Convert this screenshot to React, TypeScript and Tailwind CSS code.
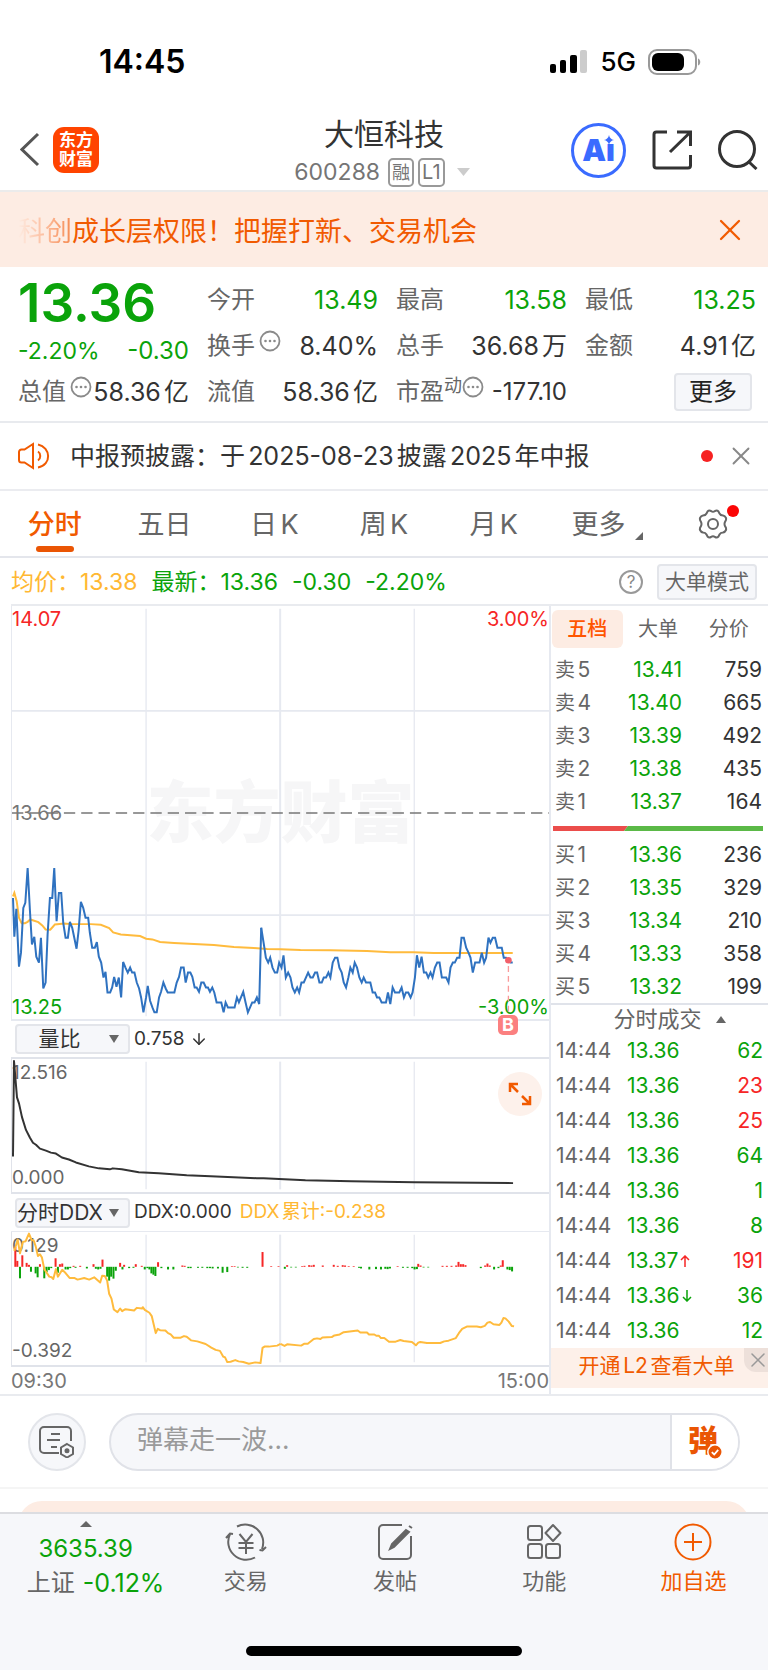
import { ArrowDown, X } from "lucide-react"

const PRICE_AM =
  "36,145 40,262 46,178 54,352 60,310 67,175 73,160 80,55 87,185 93,285 100,262 106,322 114,340 120,265 127,418 134,400 140,255 147,145 154,145 160,55 167,215 174,130 181,130 187,220 194,265 201,265 207,217 214,235 227,298 233,245 240,157 247,175 254,205 262,205 267,250 274,295 282,295 288,278 294,322 301,340 308,385 314,368 320,430 328,430 334,415 340,383 347,413 354,385 361,445 367,338 374,355 381,370 388,355 394,370 401,370 408,400 415,418 421,445 428,490 436,445 441,410 448,455 455,475 461,490 468,490 475,445 481,428 488,400 495,418 501,430 521,430 528,400 535,383 541,355 549,355 555,400 562,370 569,370 575,383 582,415 588,415 595,428 602,400 609,400 616,415 622,415 628,428 635,415 641,430 648,460 662,460 669,490 675,460 682,475 702,475 709,445 715,460 728,428 735,460 742,490 755,460 762,460 769,445 776,465 782,235"
const PRICE_PM =
  "32,235 40,285 46,325 53,340 59,325 66,355 73,370 80,370 86,340 93,355 99,318 106,385 113,370 120,385 126,415 133,430 140,415 146,430 153,400 160,400 173,370 180,385 187,385 194,370 200,370 207,400 214,400 220,385 227,385 234,370 240,385 247,340 254,325 261,325 267,355 274,370 280,400 287,415 294,385 300,355 307,370 313,340 320,355 327,385 334,400 340,385 347,400 360,400 367,430 374,430 380,445 387,445 394,460 407,460 413,430 420,465 427,415 434,430 447,430 454,415 461,445 467,430 474,430 481,445 487,430 494,385 500,318 507,355 514,322 521,370 528,370 534,385 541,370 547,385 554,355 561,340 568,340 575,385 588,385 595,400 601,355 608,340 614,340 621,325 628,325 634,265 641,265 648,295 655,310 661,325 668,370 675,340 688,340 695,310 702,340 708,325 715,265 721,280 728,265 735,265 742,295 755,295 761,325 768,325 775,333 781,340 788,340"
const AVERAGE =
  "36,140 40,130 47,155 54,205 62,221 72,221 80,217 88,210 112,218 124,228 134,240 148,241 156,232 162,225 190,222 210,224 270,224 300,226 325,236 337,249 360,255 418,260 436,268 455,270 478,278 520,281 640,287 700,293 760,296 800,299 840,300 900,302 990,303 1100,305 1170,309 1240,309 1300,311 1538,311"
const VOLUME_RATIO =
  "1,99 2,2 5,39 7,45 10,59 14,72 18,80 21,85 24,87 28,91 34,93 39,95 44,96 50,100 57,102 64,105 77,109 87,111 98,112 101,111 110,112 127,115 147,116 175,118 199,119 245,121 252,121 294,123 340,124 403,125 502,126"
const DDX_AM =
  "40,180 50,145 57,187 66,152 74,150 84,127 92,147 98,147 104,165 111,195 117,190 123,200 130,235 145,258 152,260 157,265 165,235 171,258 184,237 194,247 206,262 220,262 230,267 250,262 265,267 280,260 298,276 304,255 312,256 319,270 325,310 332,325 339,358 350,366 358,355 364,363 374,357 400,361 408,353 424,355 426,351 432,359 446,368 453,378 465,430 471,417 478,421 494,422 502,430 510,434 519,444 540,444 550,439 558,441 571,452 590,455 615,463 632,474 645,481 658,484 668,502 673,503 680,518 690,517 704,512 714,516 728,518 745,523 764,519 780,521 786,475 792,471 805,471 830,468 840,463"
const DDX_PM =
  "60,463 72,469 80,464 122,468 132,462 142,462 160,448 170,446 180,448 186,443 214,442 222,437 238,434 250,427 292,422 300,428 320,428 326,434 342,434 348,438 356,438 362,445 372,445 386,456 406,456 420,451 430,454 455,457 467,467 474,459 480,457 500,460 540,460 552,455 565,453 587,445 596,430 606,417 620,410 650,410 662,412 674,408 682,398 690,396 700,403 718,405 724,398 730,384 736,385 746,395 755,408 762,409"

// [x, height]: positive rises above the zero line, negative falls below it
const DDX_BARS = [
  [43, 60], [49, 18], [64, 35], [77, 12], [84, 6], [117, 8], [164, 26], [177, 8], [184, 10], [218, 3], [238, 3],
  [278, 8], [305, 22], [358, 12], [370, 6], [405, 8], [423, 3], [472, 14], [545, 4], [552, 3], [694, 2], [702, 2],
  [786, 45], [812, 2], [834, 2], [860, 5], [905, 2], [912, 3], [926, 5], [933, 4], [940, 6], [967, 4], [1000, 6],
  [1012, 3], [1027, 5], [1034, 4], [1045, 2], [1060, 2], [1192, 2], [1254, 9], [1261, 4], [1327, 3], [1340, 3],
  [1354, 3], [1368, 4], [1375, 15], [1382, 8], [1389, 8], [1396, 5], [1455, 4], [1462, 10], [1469, 4], [1502, 4],
  [1508, 20], [57, -35], [90, -15], [104, -20], [110, -32], [130, -35], [137, -16], [144, -10], [151, -4],
  [171, -18], [194, -8], [201, -8], [208, -4], [224, -3], [258, -5], [285, -6], [292, -8], [299, -6], [319, -30],
  [325, -42], [331, -30], [338, -36], [345, -12], [365, -8], [385, -4], [398, -3], [432, -8], [440, -4], [446, -8],
  [452, -20], [458, -24], [464, -28], [482, -4], [502, -8], [518, -8], [563, -4], [570, -4], [592, -3], [605, -3],
  [620, -4], [628, -4], [636, -5], [652, -5], [666, -18], [680, -16], [712, -2], [726, -3], [740, -3], [853, -6],
  [872, -2], [886, -2], [1076, -3], [1082, -5], [1107, -8], [1127, -7], [1142, -8], [1155, -6], [1162, -7],
  [1169, -5], [1208, -3], [1222, -3], [1236, -4], [1243, -8], [1250, -7], [1270, -2], [1284, -2], [1442, -4],
  [1482, -8], [1495, -4], [1522, -8], [1529, -10], [1536, -14],
]

const asks = [["5", "13.41", "759"], ["4", "13.40", "665"], ["3", "13.39", "492"], ["2", "13.38", "435"], ["1", "13.37", "164"]]
const bids = [["1", "13.36", "236"], ["2", "13.35", "329"], ["3", "13.34", "210"], ["4", "13.33", "358"], ["5", "13.32", "199"]]

const trades = [
  { price: "13.36", vol: "62", up: false },
  { price: "13.36", vol: "23", up: true },
  { price: "13.36", vol: "25", up: true },
  { price: "13.36", vol: "64", up: false },
  { price: "13.36", vol: "1", up: false },
  { price: "13.36", vol: "8", up: false },
  { price: "13.37", vol: "191", up: true, move: "up" },
  { price: "13.36", vol: "36", up: false, move: "down" },
  { price: "13.36", vol: "12", up: false },
]

function StatusBar() {
  return (
    <div className="flex h-24 items-center justify-between pt-7 pr-[66px] pl-[99px]">
      <span className="text-[32px] leading-9 font-semibold text-black">14:45</span>
      <div className="flex items-center">
        <svg className="h-6 w-[38px]" viewBox="0 0 38 24">
          <rect x="0" y="14" width="6" height="9" rx="2" />
          <rect x="10" y="10" width="6" height="13" rx="2" />
          <rect x="20" y="5" width="7" height="18" rx="2" />
          <rect x="30" y="0" width="7" height="23" rx="2" fill="#ccc" />
        </svg>
        <span className="ml-3 text-[26px] leading-8 font-medium text-black">5G</span>
        <svg className="ml-3 h-[26px] w-[54px]" viewBox="0 0 54 26">
          <rect x="1" y="1" width="47" height="24" rx="8" fill="none" stroke="#999" strokeWidth="2" />
          <rect x="4" y="4" width="32" height="18" rx="6" />
          <path d="M50 9.500c3 1 3 6 0 7z" fill="#999" />
        </svg>
      </div>
    </div>
  )
}

function Header() {
  return (
    <header className="grid h-24 grid-cols-[1fr_auto_1fr] items-center border-b-2 border-[#ebebeb] pt-[10px]">
      <div className="flex items-center pl-5">
        <button aria-label="返回">
          <svg className="h-9 w-5" viewBox="0 0 20 36" fill="none" stroke="#555" strokeWidth="3">
            <path d="M18 2L2 17.500L18 33" />
          </svg>
        </button>
        <div className="ml-[13px] flex h-[46px] w-[46px] flex-col items-center justify-center rounded-[11px] bg-[#ff4400] text-[17px] leading-[19px] font-bold text-white">
          <span>东方</span>
          <span>财富</span>
        </div>
      </div>
      <div className="flex flex-col items-center pt-2">
        <h1 className="text-[30px] leading-10 text-[#333]">大恒科技</h1>
        <button className="flex items-center pr-1 pb-1 text-[23px] leading-9 text-[#757575]">
          <span className="mr-2">600288</span>
          <span className="mr-1 rounded-[5px] border-2 border-[#999] px-[2px] text-[18px] leading-[25px]">融</span>
          <span className="rounded-[5px] border-2 border-[#999] px-[2px] text-[20px] leading-[25px]">L1</span>
          <svg className="ml-3 h-[8px] w-[13px]" viewBox="0 0 13 8" fill="#ccc">
            <path d="M0 0h13L6.500 8z" />
          </svg>
        </button>
      </div>
      <div className="flex items-center justify-end pr-[10px]">
        <button aria-label="AI" className="relative flex h-[55px] w-[55px] items-center justify-center rounded-full border-3 border-[#3a6bff] text-[30px] leading-8 font-black text-[#3a6bff]">
          Aı
          <svg className="absolute top-[9px] right-[9px] h-[10px] w-[10px]" viewBox="0 0 10 10" fill="#3a6bff">
            <path d="M5 0Q5.800 4.200 10 5Q5.800 5.800 5 10Q4.200 5.800 0 5Q4.200 4.200 5 0z" />
          </svg>
        </button>
        <button aria-label="分享" className="ml-[26px]">
          <svg className="h-10 w-10" viewBox="0 0 40 40" fill="none" stroke="#333" strokeWidth="3">
            <path d="M15 2H4.500A2.500 2.500 0 0 0 2 4.500V35.500A2.500 2.500 0 0 0 4.500 38H36A2.500 2.500 0 0 0 38.500 35.500V25M25 2H38.500V16M38 2.500L18 22" />
          </svg>
        </button>
        <button aria-label="搜索" className="ml-[26px]">
          <svg className="h-10 w-10" viewBox="0 0 40 40" fill="none" stroke="#333" strokeWidth="3">
            <circle cx="19" cy="19" r="17.500" />
            <path d="M30 31L38.500 39" />
          </svg>
        </button>
      </div>
    </header>
  )
}

function Notice() {
  return (
    <div className="flex h-[75px] items-center justify-between bg-[#fdece3] pr-5 pl-[18px] text-[#f15a00]">
      <p className="pt-1 text-[27px] leading-8 whitespace-nowrap">
        <span className="bg-linear-to-r from-[#fdece3] to-[#f58a50] bg-clip-text text-transparent">科创</span>
        成长层权限！把握打新、交易机会
      </p>
      <button aria-label="关闭">
        <X className="h-9 w-9" strokeWidth={1.5} />
      </button>
    </div>
  )
}

function Dots() {
  return (
    <svg className="mb-[10px] h-[22px] w-[22px] shrink-0" viewBox="0 0 22 22" fill="#8a8a8a">
      <circle cx="11" cy="11" r="9.500" fill="none" stroke="#8a8a8a" strokeWidth="1.800" />
      <circle cx="6.500" cy="11" r="1.300" />
      <circle cx="11" cy="11" r="1.300" />
      <circle cx="15.500" cy="11" r="1.300" />
    </svg>
  )
}

function Quote() {
  const cell = "flex h-[46px] items-center justify-between text-[25px] whitespace-nowrap"
  const label = "flex items-center text-[24px] text-[#666]"
  return (
    <section className="grid grid-cols-4 gap-x-[18px] border-b-2 border-[#e8eaee] pt-[10px] pr-3 pb-[6px] pl-[18px] leading-8 text-[#333]">
      <div className="row-span-2 flex flex-col text-[#0aa30a]">
        <span className="pt-[2px] text-[53px] leading-[48px] font-semibold">13.36</span>
        <div className="flex items-center justify-between pt-2">
          <span className="text-[23px]">-2.20%</span>
          <span className="text-[24px]">-0.30</span>
        </div>
      </div>
      <div className={cell}><span className={label}>今开</span><span className="text-[#0aa30a]">13.49</span></div>
      <div className={cell}><span className={label}>最高</span><span className="text-[#0aa30a]">13.58</span></div>
      <div className={cell}><span className={label}>最低</span><span className="text-[#0aa30a]">13.25</span></div>
      <div className={cell}>
        <span className={label}>换手<span className="ml-1"><Dots /></span></span>
        <span>8.40%</span>
      </div>
      <div className={cell}><span className={label}>总手</span><span>36.68万</span></div>
      <div className={cell}><span className={label}>金额</span><span>4.91亿</span></div>
      <div className={cell}>
        <span className={label}>总值<span className="ml-1"><Dots /></span></span>
        <span>58.36亿</span>
      </div>
      <div className={cell}><span className={label}>流值</span><span>58.36亿</span></div>
      <div className={cell}>
        <span className={label}>市盈<span className="mb-3 text-[18px] leading-5">动</span><Dots /></span>
        <span className="text-[24px]">-177.10</span>
      </div>
      <div className="flex items-center justify-end pr-1">
        <button className="h-[38px] w-[78px] rounded-[4px] border-2 border-[#e3e5ea] bg-[#f6f7fa] text-[24px] text-[#222]">更多</button>
      </div>
    </section>
  )
}

function News() {
  return (
    <div className="flex h-[68px] items-center border-b-2 border-[#ebecf0] pr-3 pl-[18px]">
      <svg className="h-7 w-8" viewBox="0 0 32 28" fill="none" stroke="#f15a00" strokeWidth="2">
        <path d="M15 2V26L6.500 20.500H3.500A2.500 2.500 0 0 1 1 18V10A2.500 2.500 0 0 1 3.500 7.500H6.500L15 2zM20 9.500C23 11.500 23 16.500 20 18.500M20 2.500C33 5 34 23 20 25.500" />
      </svg>
      <a href="#news" className="ml-5 flex-1 text-[25px] leading-8 whitespace-nowrap text-[#333]">
        中报预披露：于2025-08-23披露2025年中报
      </a>
      <span className="h-3 w-3 rounded-full bg-[#f62222]" />
      <button aria-label="关闭" className="ml-[13px]">
        <X className="h-[30px] w-[30px] text-[#888]" strokeWidth={1.5} />
      </button>
    </div>
  )
}

function PeriodTabs() {
  return (
    <nav className="grid h-[67px] grid-cols-7 border-b-2 border-[#e4e6ec] text-[27px] text-[#666]">
      <button className="relative pt-1 font-medium text-[#f15a00]">
        分时
        <span className="absolute bottom-[4px] left-1/2 h-[6px] w-[38px] -translate-x-1/2 rounded-full bg-[#ea5504]" />
      </button>
      <button className="pt-1">五日</button>
      <button className="pt-1">日K</button>
      <button className="pt-1">周K</button>
      <button className="pt-1">月K</button>
      <button className="flex items-center justify-center gap-[10px] pt-1 pl-2">
        更多
        <svg className="mt-5 h-2 w-2" viewBox="0 0 8 8" fill="#666"><path d="M8 0V8H0z" /></svg>
      </button>
      <button aria-label="设置" className="flex items-center justify-center">
        <span className="relative">
          <svg className="h-[30px] w-8" viewBox="0 0 32 30" fill="none" stroke="#666" strokeWidth="2">
            <path d="M10.500 2.500Q12 1 14 2Q16 3.500 18 2Q20 1 21.500 2.500L22.500 4.500Q23.500 6.500 26 6.500Q28 6.800 29 9Q29.500 11 28.200 12.500Q26.800 15 28.200 17.500Q29.500 19 29 21Q28 23.200 26 23.500Q23.500 23.500 22.500 25.500L21.500 27.500Q20 29 18 28Q16 26.500 14 28Q12 29 10.500 27.500L9.500 25.500Q8.500 23.500 6 23.500Q4 23.200 3 21Q2.500 19 3.800 17.500Q5.200 15 3.800 12.500Q2.500 11 3 9Q4 6.800 6 6.500Q8.500 6.500 9.500 4.500z" />
            <circle cx="16" cy="15" r="5" />
          </svg>
          <span className="absolute -top-1 -right-[10px] h-3 w-3 rounded-full bg-[#fb0505]" />
        </span>
      </button>
    </nav>
  )
}

function ChartLegend() {
  return (
    <div className="flex h-[46px] items-center pt-[2px] pr-[11px] pl-[11px] text-[23px] leading-7 whitespace-nowrap text-[#0aa30a]">
      <span className="text-[#ffb833]">均价：13.38</span>
      <span className="ml-[14px]">最新：13.36</span>
      <span className="ml-[14px]">-0.30</span>
      <span className="ml-[14px]">-2.20%</span>
      <button aria-label="说明" className="ml-auto flex h-6 w-6 items-center justify-center rounded-full border-2 border-[#999] text-[17px] leading-5 text-[#888]">?</button>
      <button className="ml-[14px] h-9 w-[100px] rounded-[4px] border-2 border-[#e3e5ea] bg-[#f6f7fa] text-[21px] text-[#666]">大单模式</button>
    </div>
  )
}

function GridLines({ height }: { height: number }) {
  return (
    <g stroke="#e6e9f0" strokeWidth="4">
      <path d={`M403 8V${height - 8}M1209 8V${height - 8}`} strokeWidth="4" />
      <path d={`M806 8V${height - 8}`} strokeWidth="6" />
    </g>
  )
}

function PriceChart() {
  return (
    <div className="relative h-[415px] border-b-2 border-l border-[#e6e9f0] text-[20px] leading-5">
      <span className="absolute inset-x-0 top-[167px] text-center text-[67px] leading-[80px] font-black text-[#f6f6f7]">东方财富</span>
      <svg className="absolute inset-0 h-full w-full" viewBox="0 0 1614 1245" preserveAspectRatio="none" fill="none">
        <GridLines height={1245} />
        <path d="M0 316H1614M0 932H1614" stroke="#e6e9f0" strokeWidth="5" />
        <path d="M0 624H1614" stroke="#777" strokeWidth="4" strokeDasharray="34 18" />
        <g transform="translate(-33 735)" strokeWidth="6">
          <polyline points={AVERAGE} stroke="#ffbb3d" />
          <polyline points={PRICE_AM} stroke="#2f72c0" />
          <g transform="translate(750 0)">
            <polyline points={PRICE_PM} stroke="#2f72c0" />
          </g>
        </g>
      </svg>
      <span className="absolute top-[3px] left-0 text-[#f62626]">14.07</span>
      <span className="absolute top-[3px] right-0 text-[#f62626]">3.00%</span>
      <span className="absolute top-[197px] left-0 text-[#777]">13.66</span>
      <span className="absolute bottom-1 left-0 leading-4 text-[#0aa30a]">13.25</span>
      <span className="absolute right-0 bottom-1 leading-4 text-[#0aa30a]">-3.00%</span>
      <svg className="absolute inset-0 h-full w-full" viewBox="0 0 1614 1245" preserveAspectRatio="none" fill="none">
        <path d="M1492 1085V1230" stroke="#fa9a9a" strokeWidth="4" strokeDasharray="18 12" />
        <circle cx="1492" cy="1068" r="10" fill="#f2606a" />
      </svg>
      <span className="absolute right-[31px] -bottom-4 h-5 w-5 rounded-[5px] bg-[#fb8080] text-center text-[18px] leading-5 font-bold text-white">B</span>
    </div>
  )
}

function IndicatorSelect({ label, value }: { label: string; value: string }) {
  return (
    <div className="relative mr-1 ml-1 h-[30px] w-[115px] shrink-0">
      <select aria-label={label} className="h-full w-full appearance-none rounded-[4px] border-2 border-[#e3e5ea] bg-[#f6f7fa] pr-[26px] text-center text-[21px] leading-6 text-[#333]">
        <option>{value}</option>
      </select>
      <svg className="pointer-events-none absolute top-[11px] right-[11px] h-2 w-[10px]" viewBox="0 0 10 8" fill="#666">
        <path d="M0 0H10L5 8z" />
      </svg>
    </div>
  )
}

function VolumeRatioChart() {
  return (
    <div className="relative h-[135px] border-b-2 border-l border-[#e0e3ea] text-[19px] leading-5 text-[#666]">
      <span className="absolute top-1 left-0">12.516</span>
      <span className="absolute bottom-1 left-0">0.000</span>
      <svg className="absolute inset-0 h-full w-full" viewBox="0 0 1614 405" preserveAspectRatio="none" fill="none">
        <GridLines height={405} />
      </svg>
      <svg className="absolute inset-0 h-full w-full" viewBox="0 0 538 135" preserveAspectRatio="none" fill="none">
        <polyline points={VOLUME_RATIO} stroke="#333" strokeWidth="2" strokeLinejoin="round" />
      </svg>
      <button aria-label="全屏" className="absolute top-[13px] right-[7px] flex h-11 w-11 items-center justify-center rounded-full bg-[#fdf1eb]">
        <svg className="h-6 w-6" viewBox="0 0 24 24" fill="none" stroke="#f15a00" strokeWidth="2.500">
          <path d="M2 10V2H10M2 2L10 10M22 14V22H14M22 22L14 14" />
        </svg>
      </button>
    </div>
  )
}

function DdxChart() {
  return (
    <div className="relative h-[135px] border-b-2 border-l border-[#e0e3ea] text-[19px] leading-5 text-[#666]">
      <span className="absolute top-1 left-0">0.129</span>
      <span className="absolute bottom-1 left-0">-0.392</span>
      <svg className="absolute inset-0 h-full w-full" viewBox="0 0 1614 405" preserveAspectRatio="none" fill="none">
        <GridLines height={405} />
        <g transform="translate(-33 -122)">
          {DDX_BARS.map(([x, h]) => (
            <rect key={x} x={x - 3} y={h > 0 ? 228 - h : 228} width="6" height={Math.abs(h)} fill={h > 0 ? "#f62626" : "#0aa30a"} />
          ))}
          <g stroke="#ffbb3d" strokeWidth="6" strokeLinejoin="round">
            <polyline points={DDX_AM} />
            <polyline points={DDX_PM} transform="translate(780 0)" />
          </g>
        </g>
      </svg>
    </div>
  )
}

function Charts() {
  return (
    <div className="min-w-0 flex-1">
      <PriceChart />
      <div className="flex h-[38px] items-center border-b-2 border-[#e0e3ea] text-[19px] text-[#333]">
        <IndicatorSelect label="指标一" value="量比" />
        <span>0.758</span>
        <ArrowDown className="ml-[5px] h-[18px] w-[18px]" strokeWidth={2} />
      </div>
      <VolumeRatioChart />
      <div className="flex h-[38px] items-center border-b border-[#e6e9f0] text-[19px] whitespace-nowrap text-[#333]">
        <IndicatorSelect label="指标二" value="分时DDX" />
        <span>DDX:0.000</span>
        <span className="ml-2 text-[#ffb833]">DDX累计:-0.238</span>
      </div>
      <DdxChart />
      <div className="flex h-[27px] items-center justify-between text-[20px] text-[#777]">
        <span>09:30</span>
        <span>15:00</span>
      </div>
    </div>
  )
}

function Levels({ side, rows }: { side: string; rows: string[][] }) {
  return (
    <table className="w-full table-fixed">
      <tbody>
        {rows.map(([level, price, vol]) => (
          <tr key={level} className="h-[33px]">
            <td className="w-[59px] p-0 pl-1 text-[#666]"><span className="text-[20px]">{side}</span>{level}</td>
            <td className="w-[72px] p-0 text-right text-[#0aa30a]">{price}</td>
            <td className="p-0 pr-[6px] text-right text-[#333]">{vol}</td>
          </tr>
        ))}
      </tbody>
    </table>
  )
}

function OrderBook() {
  return (
    <aside className="w-[219px] shrink-0 border-l-2 border-[#e6e9f0] text-[21px] leading-7">
      <div className="mb-[5px] grid h-[42px] grid-cols-3 pt-1 pr-1 pl-[1px] text-[20px] text-[#666]">
        <button className="rounded-[6px] bg-[#fdece3] font-medium text-[#ff5500]">五档</button>
        <button>大单</button>
        <button>分价</button>
      </div>
      <Levels side="卖" rows={asks} />
      <div className="flex h-5 items-center pr-[5px] pl-[2px]">
        <svg className="h-[5px] w-full" viewBox="0 0 210 5" preserveAspectRatio="none">
          <path d="M0 0H75L71 5H0z" fill="#eb4d4b" />
          <path d="M75 0H210V5H71z" fill="#5bb947" />
        </svg>
      </div>
      <Levels side="买" rows={bids} />
      <button className="flex h-[30px] w-full items-center justify-center gap-[14px] border-t-2 border-[#e0e3ea] pl-5 text-[22px] leading-7 text-[#666]">
        分时成交
        <svg className="h-[7px] w-[10px]" viewBox="0 0 10 7" fill="#666"><path d="M5 0L10 7H0z" /></svg>
      </button>
      <table className="w-full table-fixed">
        <tbody>
          {trades.map((t, i) => (
            <tr key={i} className="h-[35px]">
              <td className="w-[66px] p-0 pl-[5px] text-[#666]">14:44</td>
              <td className="w-[82px] p-0 text-[#0aa30a]">
                <div className="flex items-center pl-[10px]">
                  {t.price}
                  {t.move && (
                    <svg className={t.move === "up" ? "ml-[2px] h-3 w-[10px] text-[#f62626]" : "ml-[2px] h-3 w-[10px] rotate-180"} viewBox="0 0 10 12" fill="none" stroke="currentColor" strokeWidth="1.500">
                      <path d="M5 12V1M1 5L5 1L9 5" />
                    </svg>
                  )}
                </div>
              </td>
              <td className={t.up ? "p-0 pr-[5px] text-right text-[#f62626]" : "p-0 pr-[5px] text-right text-[#0aa30a]"}>{t.vol}</td>
            </tr>
          ))}
        </tbody>
      </table>
      <div className="relative flex h-10 items-center justify-center bg-[#fdf0e9] pr-[6px] pb-1 text-[21px]">
        <a href="#l2" className="text-[#f15a00]">开通L2查看大单</a>
        <button aria-label="关闭" className="absolute top-0 right-0 flex h-6 w-6 items-center justify-center rounded-bl-[12px] bg-[#ede0da] pl-1">
          <X className="h-6 w-6 shrink-0 text-[#999]" strokeWidth={1.5} />
        </button>
      </div>
    </aside>
  )
}

function Barrage() {
  return (
    <div className="flex h-[95px] items-center border-t-2 border-b-2 border-t-[#e9ebef] border-b-[#f5f5f5] pr-7 pl-7">
      <button aria-label="弹幕设置" className="flex h-[58px] w-[58px] shrink-0 items-center justify-center rounded-full border-2 border-[#e3e5ea] bg-[#f6f7fa]">
        <svg className="h-8 w-9" viewBox="0 0 36 32" fill="none" stroke="#666" strokeWidth="2">
          <path d="M20 27H5A4 4 0 0 1 1 23V5A4 4 0 0 1 5 1H28A4 4 0 0 1 32 5V15M12 8H21M8 14H21M12 21H18" />
          <path d="M28 18L34 21.500V28L28 31.500L22 28V21.500z" />
          <circle cx="28" cy="24.800" r="1.500" fill="#666" />
        </svg>
      </button>
      <div className="ml-[23px] flex h-[58px] flex-1 overflow-hidden rounded-full border-2 border-[#e0e2e8] bg-[#f6f7fa]">
        <input aria-label="弹幕" placeholder="弹幕走一波..." className="min-w-0 flex-1 pb-1 pl-[26px] text-[26px] leading-8 outline-none placeholder:text-[#9a9a9a]" />
        <button className="relative w-[68px] border-l-2 border-[#e0e2e8] bg-white pr-1 pb-1 text-[30px] leading-8 font-black text-[#ea5504]">
          弹
          <svg className="absolute right-[15px] bottom-[9px] h-4 w-4" viewBox="0 0 16 16" fill="none">
            <circle cx="8" cy="8" r="7.200" fill="#ea5504" stroke="#fff" strokeWidth="1.500" />
            <path d="M4.800 8.200L7.200 10.500L11.200 5.800" stroke="#fff" strokeWidth="1.800" />
          </svg>
        </button>
      </div>
    </div>
  )
}

function BottomNav() {
  const item = "flex flex-col items-center gap-[6px] pt-[9px]"
  const icon = "h-[38px] w-[42px]"
  return (
    <footer className="border-t-2 border-[#dcdde1] bg-[#f6f7fa] pb-[14px] text-[#666]">
      <nav className="grid h-[132px] grid-cols-[171fr_149fr_149fr_149fr_149fr] text-[22px] leading-7">
        <button className="flex flex-col items-center pt-[7px] text-[24px] leading-[34px] text-[#0aa30a]">
          <svg className="h-[6px] w-3" viewBox="0 0 12 6" fill="#666"><path d="M6 0L12 6H0z" /></svg>
          <span className="mt-[5px]">3635.39</span>
          <span className="ml-5 flex gap-2 whitespace-nowrap">
            <span className="text-[#666]">上证</span>
            <span className="text-[25px]">-0.12%</span>
          </span>
        </button>
        <a href="#trade" className={item}>
          <svg className={icon} viewBox="0 0 42 38" fill="none" stroke="#666" strokeWidth="2">
            <path d="M12 3.500A18 18 0 0 1 37 26M30 34.500A18 18 0 0 1 5 11M1 15L5 10.500L8 11M41 24L37.500 27.500L34.500 27M14.500 11L21 19L27.500 11M13.500 20H28.500M13.500 25H28.500M21 19V31" />
          </svg>
          交易
        </a>
        <a href="#post" className={item}>
          <svg className={icon} viewBox="0 0 42 38" fill="none" stroke="#666" strokeWidth="2">
            <path d="M28 2H9A4 4 0 0 0 5 6V32A4 4 0 0 0 9 36H33A4 4 0 0 0 37 32V13" />
            <path d="M32 7L35 9L20 24L16 26L18 21z M35 3L38 5" fill="#666" />
          </svg>
          发帖
        </a>
        <a href="#features" className={item}>
          <svg className={icon} viewBox="0 0 42 38" fill="none" stroke="#666" strokeWidth="2">
            <rect x="5" y="3" width="14" height="14" rx="2.500" />
            <rect x="5" y="21" width="14" height="14" rx="2.500" />
            <rect x="23" y="21" width="14" height="14" rx="2.500" />
            <path d="M30 2L37.500 10L30 18L22.500 10z" strokeLinejoin="round" />
          </svg>
          功能
        </a>
        <button className={`${item} text-[#f15a00]`}>
          <svg className={icon} viewBox="0 0 42 38" fill="none" stroke="#f15a00" strokeWidth="2">
            <circle cx="21" cy="19" r="17.500" />
            <path d="M21 10V28M12 19H30" />
          </svg>
          加自选
        </button>
      </nav>
      <div className="mx-auto h-[10px] w-[276px] rounded-full bg-black" />
    </footer>
  )
}

export default function App() {
  return (
    <div className="bg-white font-['Inter','Noto_Sans_CJK_SC',sans-serif] [text-autospace:normal]">
      <StatusBar />
      <Header />
      <Notice />
      <Quote />
      <News />
      <PeriodTabs />
      <ChartLegend />
      <main className="ml-[11px] flex border-t-2 border-[#e9ebef]">
        <Charts />
        <OrderBook />
      </main>
      <Barrage />
      <div className="mx-[18px] mt-3 h-[11px] overflow-hidden">
        <div className="h-12 rounded-[24px] bg-[#fdece3]" />
      </div>
      <BottomNav />
    </div>
  )
}
